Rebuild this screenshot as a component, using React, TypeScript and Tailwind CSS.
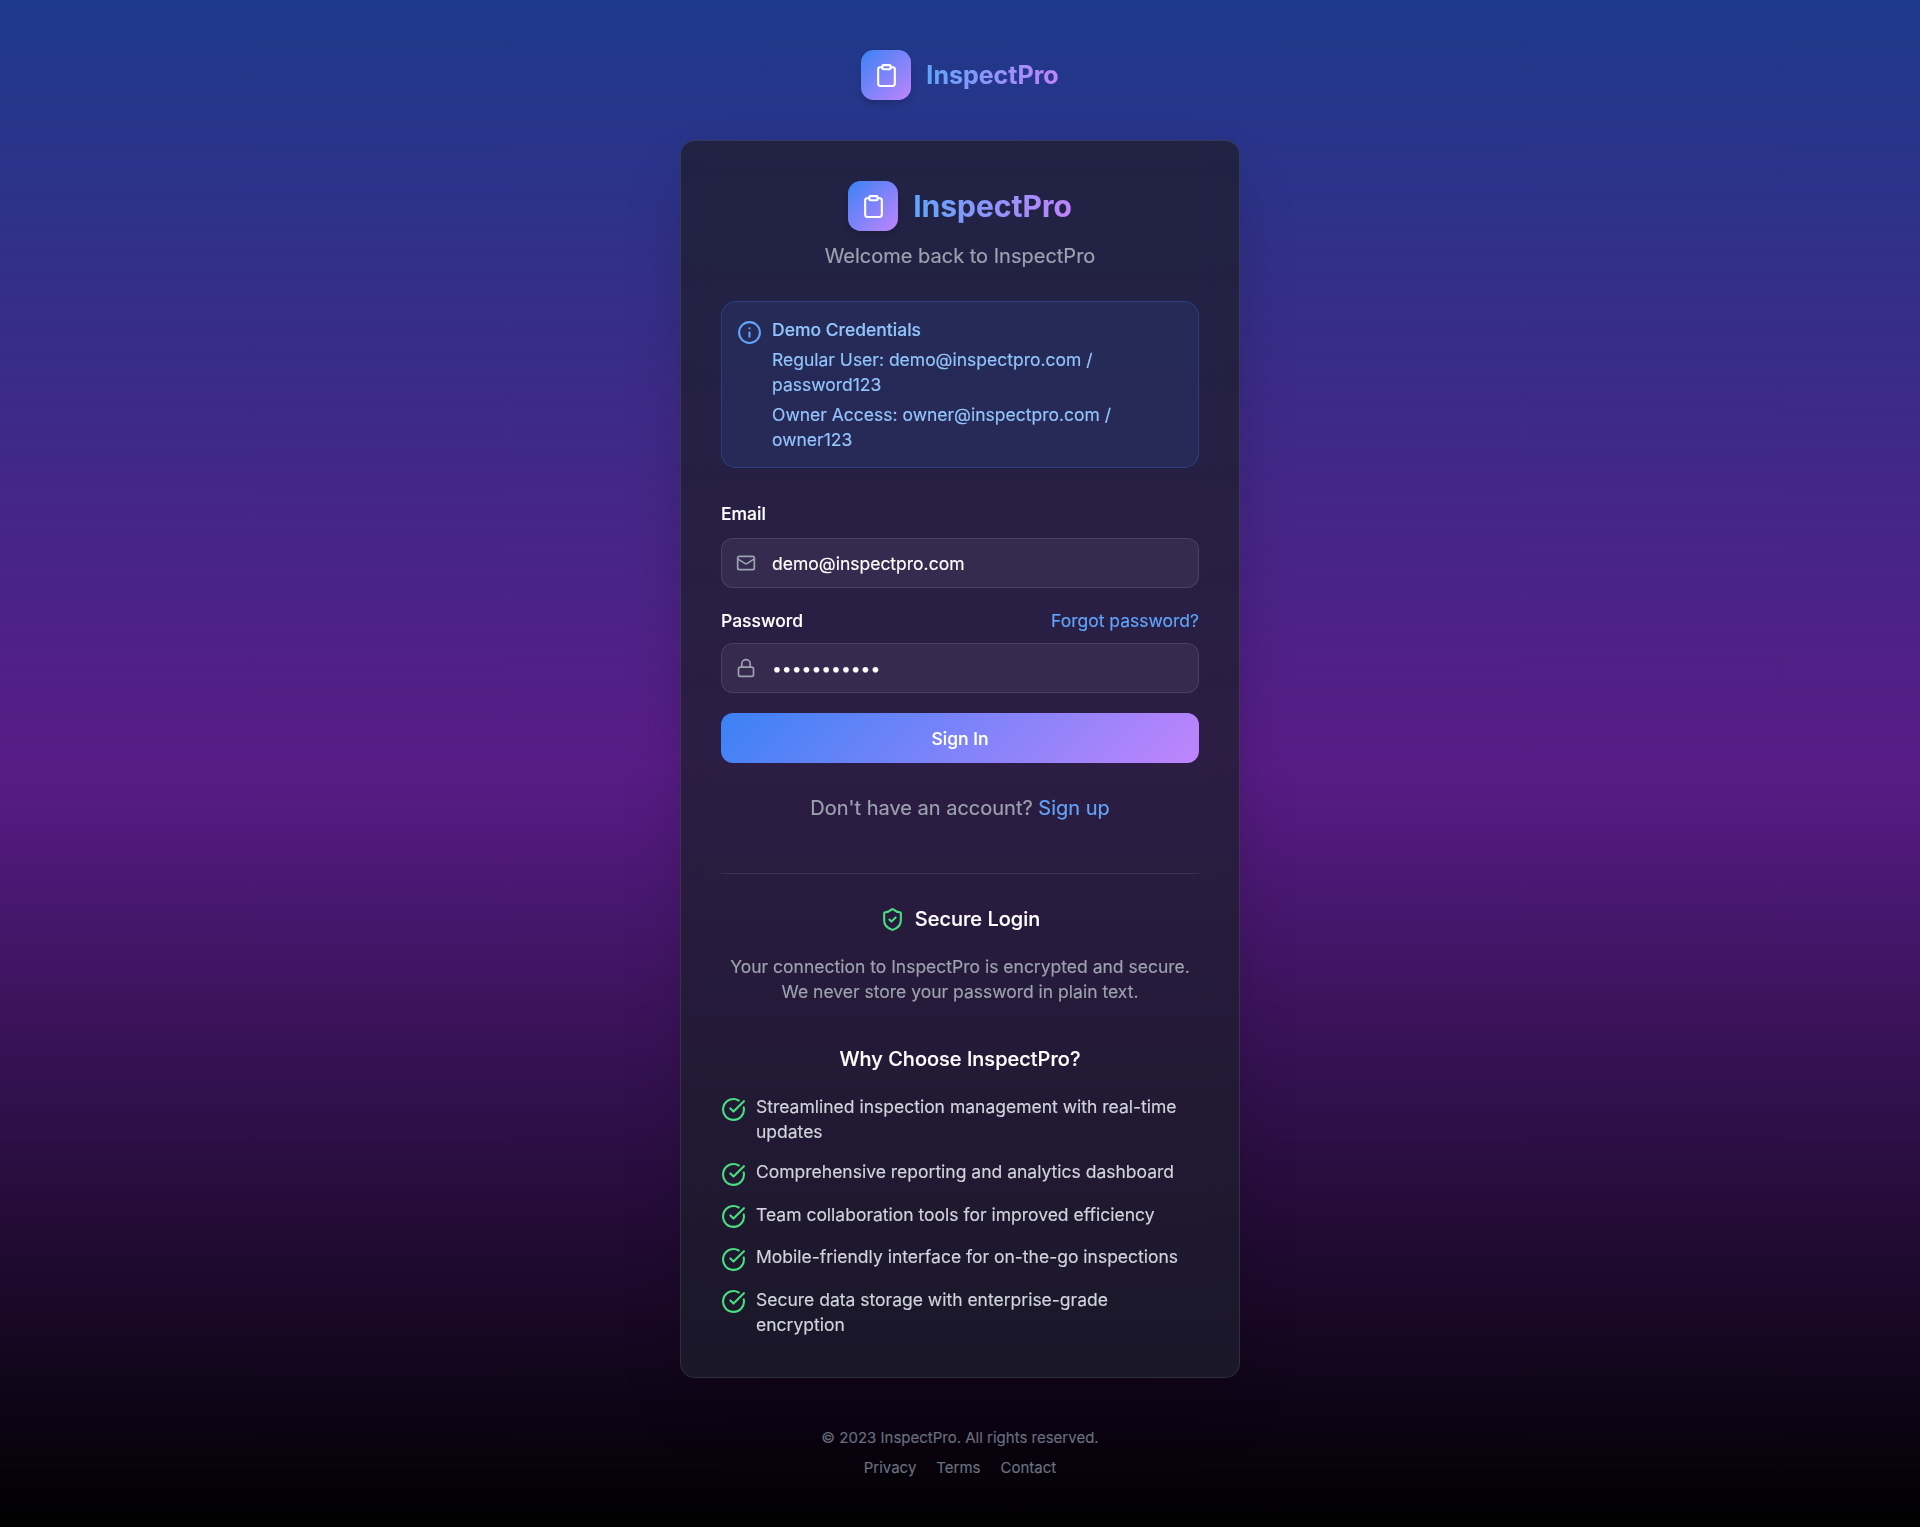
import { CircleCheckBig, Clipboard, Info, Lock, Mail, ShieldCheck } from 'lucide-react';

const FEATURES = [
  'Streamlined inspection management with real-time updates',
  'Comprehensive reporting and analytics dashboard',
  'Team collaboration tools for improved efficiency',
  'Mobile-friendly interface for on-the-go inspections',
  'Secure data storage with enterprise-grade encryption'
];

function Logo({ textClass }: { textClass: string }) {
  return (
    <div className="flex items-center justify-center gap-[15px]">
      <div className="flex h-[50px] w-[50px] items-center justify-center rounded-[12.5px] bg-[linear-gradient(135deg,#3b82f6,#c084fc)] shadow-[0_5px_8px_-2px_rgba(0,0,0,0.2)]">
        <Clipboard className="h-[25px] w-[25px] text-white" />
      </div>
      <span className={`bg-[linear-gradient(to_right,#60a5fa,#c084fc)] bg-clip-text font-bold text-transparent ${textClass}`}>InspectPro</span>
    </div>
  );
}

export default function App() {
  return (
    <div className="flex min-h-screen flex-col items-center bg-[linear-gradient(to_bottom,#1e3a8a,#581c87,#000000)] py-[50px] font-['Inter',sans-serif] [-webkit-text-stroke:0.15px]">
      <div className="mb-[40px]">
        <Logo textClass="text-[25px] leading-[35px]" />
      </div>

      <div className="w-[560px] rounded-[15px] border border-white/10 bg-[#1e1e2e]/75 p-[40px] shadow-[0_31px_62px_-15px_rgba(0,0,0,0.25)] backdrop-blur-md">
        <div className="mb-[30px] text-center">
          <div className="mb-[10px]">
            <Logo textClass="text-[30px] leading-[45px]" />
          </div>
          <p className="text-[20px] leading-[30px] text-[#9ca3af]">Welcome back to InspectPro</p>
        </div>

        <div className="mb-[33px] flex gap-[10px] rounded-[15px] border border-[#3b82f6]/25 bg-[#3b82f6]/10 p-[15px] text-[17.5px] leading-[25px] text-[#93c5fd]">
          <Info className="mt-[2.5px] h-[25px] w-[25px] shrink-0 text-[#60a5fa]" />
          <div>
            <p className="mb-[5px] font-medium">Demo Credentials</p>
            <p className="mb-[5px]">Regular User: demo@inspectpro.com / password123</p>
            <p>Owner Access: owner@inspectpro.com / owner123</p>
          </div>
        </div>

        <label className="mb-[12px] block text-[17.5px] font-medium leading-[25px] text-white">Email</label>
        <div className="mb-[20px] flex h-[50px] items-center gap-[16px] rounded-[12px] border border-white/10 bg-white/[0.06] pl-[14px]">
          <Mail className="h-[20px] w-[20px] shrink-0 text-[#9ca3af]" />
          <input readOnly value="demo@inspectpro.com" className="w-full bg-transparent pt-[2px] text-[17.5px] text-white outline-none" />
        </div>

        <div className="mb-[10px] flex items-center justify-between text-[17.5px] leading-[25px]">
          <label className="font-medium text-white">Password</label>
          <a className="text-[#60a5fa]">Forgot password?</a>
        </div>
        <div className="mb-[20px] flex h-[50px] items-center gap-[16px] rounded-[12px] border border-white/10 bg-white/[0.06] pl-[14px]">
          <Lock className="h-[20px] w-[20px] shrink-0 text-[#9ca3af]" />
          <input readOnly type="password" value="password123" className="w-full bg-transparent pt-[2px] text-[17.5px] text-white outline-none" />
        </div>

        <button className="h-[50px] w-full rounded-[12px] bg-[linear-gradient(135deg,#3b82f6,#c084fc)] pt-[2px] text-[17.5px] font-medium text-white">Sign In</button>

        <p className="mt-[30px] text-center text-[20px] leading-[30px] text-[#9ca3af]">
          Don't have an account? <a className="text-[#60a5fa]">Sign up</a>
        </p>

        <div className="mt-[50px] border-t border-white/10 pt-[30px]">
          <div className="mb-[20px] flex items-center justify-center gap-[10px]">
            <ShieldCheck className="h-[25px] w-[25px] text-[#4ade80]" />
            <h3 className="text-[20px] font-medium leading-[30px] text-white">Secure Login</h3>
          </div>
          <p className="mb-[40px] text-center text-[17.5px] leading-[25px] text-[#9ca3af]">
            Your connection to InspectPro is encrypted and secure. We never store your password in plain text.
          </p>
          <h3 className="mb-[20px] text-center text-[20px] font-medium leading-[30px] text-white">Why Choose InspectPro?</h3>
          <ul className="flex flex-col gap-[15px]">
            {FEATURES.map(feature => (
              <li key={feature} className="flex items-start gap-[10px] text-[17.5px] leading-[25px] text-[#d1d5db]">
                <CircleCheckBig className="mt-[2.5px] h-[25px] w-[25px] shrink-0 text-[#4ade80]" />
                <span>{feature}</span>
              </li>
            ))}
          </ul>
        </div>
      </div>

      <div className="mt-[50px] text-center text-[15px] leading-[20px] text-[#6b7280]">
        <p>© 2023 InspectPro. All rights reserved.</p>
        <div className="mt-[10px] flex justify-center gap-[20px]">
          <a>Privacy</a>
          <a>Terms</a>
          <a>Contact</a>
        </div>
      </div>
    </div>
  );
}
